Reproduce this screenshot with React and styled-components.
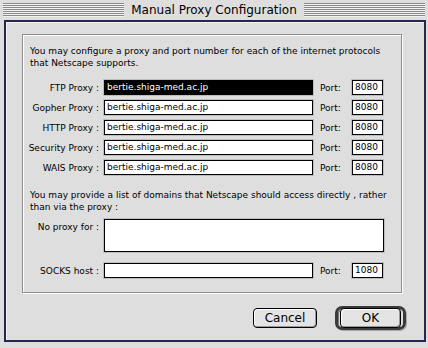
import React from 'react';
import styled, { createGlobalStyle } from 'styled-components';

const GlobalStyle = createGlobalStyle`
  html, body { margin: 0; padding: 0; background: #dedede; }
  * { box-sizing: border-box; }
`;

const Screen = styled.div`
  width: 428px;
  height: 348px;
  overflow: hidden;
  background: #dedede;
  font-family: "DejaVu Sans", sans-serif;
  color: #000;
`;

const TitleBar = styled.div`
  height: 20px;
  display: flex;
  align-items: center;
  padding: 0 3px;
  gap: 7px;
`;

const Stripes = styled.div`
  flex: 1;
  height: 14px;
  background: repeating-linear-gradient(to bottom, #8a8a8a 0 1px, #f2f2f2 1px 2px);
`;

const Title = styled.div`
  font-size: 12px;
  line-height: 14px;
  white-space: nowrap;
`;

const Panel = styled.div`
  margin: 0 2px 0 4px;
  height: 322px;
  border: 2px solid #26264e;
  background: #dedede;
  box-shadow: inset 1px 1px 0 #f4f4f4;
  padding: 12px 22px 0 16px;
`;

const Group = styled.div`
  border: 1px solid #8e8e8e;
  box-shadow: 1px 1px 0 #fff, inset 1px 1px 0 #fff;
  padding: 10px 0 14px 7px;
  font-size: 9px;
`;

const Para = styled.p`
  margin: ${p => p.$top || 0}px 0 0;
  line-height: 12px;
  white-space: nowrap;
`;

const Rows = styled.div`
  margin-top: ${p => p.$top}px;
  margin-left: -7px;
  display: flex;
  flex-direction: column;
  gap: 5px;
`;

const Row = styled.div`
  display: flex;
  align-items: ${p => (p.$top ? 'flex-start' : 'center')};
`;

const Label = styled.div`
  width: 76px;
  margin-right: 5px;
  text-align: right;
  white-space: nowrap;
  padding-top: ${p => p.$pad || 0}px;
`;

const Field = styled.div`
  width: ${p => p.$w || 209}px;
  height: ${p => p.$h || 15}px;
  border: 1px solid #000;
  background: ${p => (p.$selected ? '#000' : '#fff')};
  color: ${p => (p.$selected ? '#fff' : '#000')};
  box-shadow: 0 0 0 1px #bdbdbd;
  padding: 0 2px;
  line-height: 13px;
  white-space: nowrap;
  overflow: hidden;
`;

const PortLabel = styled.div`
  margin-left: 7px;
  width: 32px;
`;

const ButtonRow = styled.div`
  margin: 13px -4px 0 0;
  height: 24px;
  display: flex;
  justify-content: flex-end;
  align-items: center;
  gap: 18px;
`;

const Button = styled.div`
  width: ${p => p.$w}px;
  height: 20px;
  border: 1px solid #000;
  border-radius: 4px;
  background: #e4e4e4;
  box-shadow: inset 1px 1px 0 #fff, inset -1px -1px 0 #9a9a9a;
  font-size: 12px;
  display: flex;
  align-items: center;
  justify-content: center;
`;

const DefaultRing = styled.div`
  width: 71px;
  height: 24px;
  border: 3px solid #3a3a3a;
  border-radius: 7px;
  box-shadow: inset 1px 1px 0 #777, 1px 1px 0 #aaa;
  display: flex;
  align-items: center;
  justify-content: center;
`;

const host = 'bertie.shiga-med.ac.jp';
const proxies = [
  { name: 'FTP Proxy :', selected: true },
  { name: 'Gopher Proxy :' },
  { name: 'HTTP Proxy :' },
  { name: 'Security Proxy :' },
  { name: 'WAIS Proxy :' },
];

export default function App() {
  return (
    <Screen>
      <GlobalStyle />
      <TitleBar>
        <Stripes />
        <Title>Manual Proxy Configuration</Title>
        <Stripes />
      </TitleBar>
      <Panel>
        <Group>
          <Para>
            You may configure a proxy and port number for each of the internet protocols
            <br />
            that Netscape supports.
          </Para>
          <Rows $top={11}>
            {proxies.map(p => (
              <Row key={p.name}>
                <Label>{p.name}</Label>
                <Field $selected={p.selected}>{host}</Field>
                <PortLabel>Port:</PortLabel>
                <Field $w={31}>8080</Field>
              </Row>
            ))}
          </Rows>
          <Para $top={14}>
            You may provide a list of domains that Netscape should access directly , rather
            <br />
            than via the proxy :
          </Para>
          <Rows $top={6}>
            <Row $top>
              <Label $pad={3}>No proxy for :</Label>
              <Field $w={280} $h={33} />
            </Row>
          </Rows>
          <Rows $top={11}>
            <Row>
              <Label>SOCKS host :</Label>
              <Field />
              <PortLabel>Port:</PortLabel>
              <Field $w={31}>1080</Field>
            </Row>
          </Rows>
        </Group>
        <ButtonRow>
          <Button $w={64}>Cancel</Button>
          <DefaultRing>
            <Button $w={61}>OK</Button>
          </DefaultRing>
        </ButtonRow>
      </Panel>
    </Screen>
  );
}
